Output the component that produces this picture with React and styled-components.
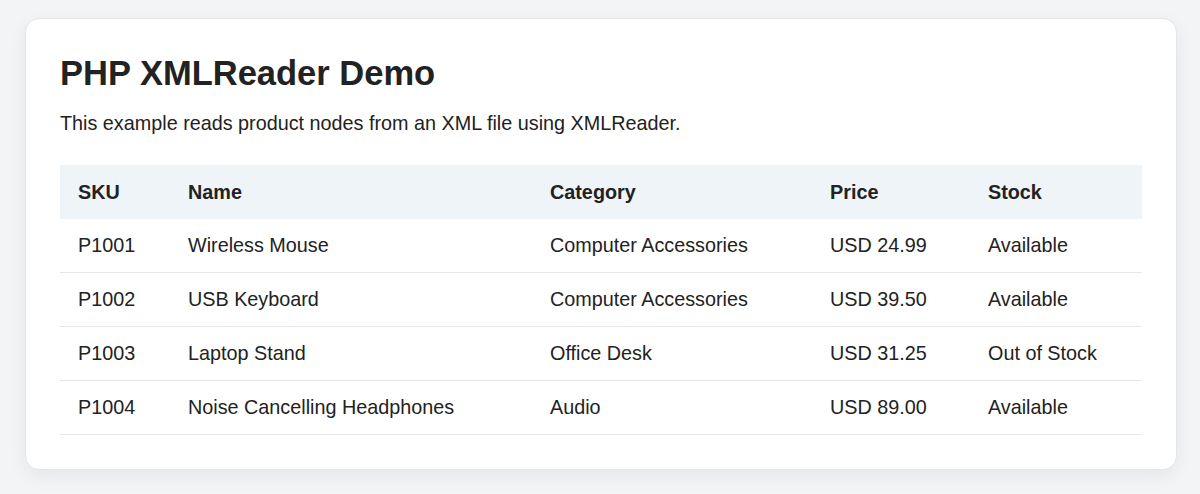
import styled, { createGlobalStyle } from "styled-components";

const GlobalStyle = createGlobalStyle`
  html, body {
    margin: 0;
    padding: 0;
    background: #f3f4f6;
    font-family: "Liberation Sans", Arial, sans-serif;
    color: #222;
  }
`;

const Page = styled.div`
  padding: 18px 23px 24px 25px;
`;

const Card = styled.div`
  background: #ffffff;
  border: 1px solid #e3e5e8;
  border-radius: 14px;
  box-shadow: 0 6px 20px rgba(15, 23, 42, 0.06);
  padding: 34px 34px 34px 34px;
`;

const Title = styled.h1`
  margin: 0 0 16px;
  font-size: 34.5px;
  line-height: 1.2;
  font-weight: 700;
  color: #222;
`;

const Intro = styled.p`
  margin: 0 0 28px;
  font-size: 19.8px;
  line-height: 27px;
  color: #222;
`;

const Table = styled.table`
  width: 100%;
  border-collapse: collapse;
  font-size: 19.8px;
`;

const HeadRow = styled.tr`
  background: #eff4f9;
`;

const Th = styled.th`
  text-align: left;
  font-weight: 700;
  height: 54px;
  padding: 0 18px;
  width: ${(p) => p.$w || "auto"};
  box-sizing: border-box;
  color: #222;
`;

const Row = styled.tr`
  border-bottom: 1px solid #e5e7eb;
`;

const Td = styled.td`
  height: 53px;
  padding: 0 18px;
  color: #222;
`;

const products = [
  ["P1001", "Wireless Mouse", "Computer Accessories", "USD 24.99", "Available"],
  ["P1002", "USB Keyboard", "Computer Accessories", "USD 39.50", "Available"],
  ["P1003", "Laptop Stand", "Office Desk", "USD 31.25", "Out of Stock"],
  ["P1004", "Noise Cancelling Headphones", "Audio", "USD 89.00", "Available"],
];

const App = () => {
  return (
    <>
      <GlobalStyle />
      <Page>
        <Card>
          <Title>PHP XMLReader Demo</Title>
          <Intro>This example reads product nodes from an XML file using XMLReader.</Intro>
          <Table>
            <thead>
              <HeadRow>
                <Th $w="110px">SKU</Th>
                <Th $w="362px">Name</Th>
                <Th $w="280px">Category</Th>
                <Th $w="158px">Price</Th>
                <Th>Stock</Th>
              </HeadRow>
            </thead>
            <tbody>
              {products.map((p) => (
                <Row key={p[0]}>
                  {p.map((cell, i) => (
                    <Td key={i}>{cell}</Td>
                  ))}
                </Row>
              ))}
            </tbody>
          </Table>
        </Card>
      </Page>
    </>
  );
};

export default App;
